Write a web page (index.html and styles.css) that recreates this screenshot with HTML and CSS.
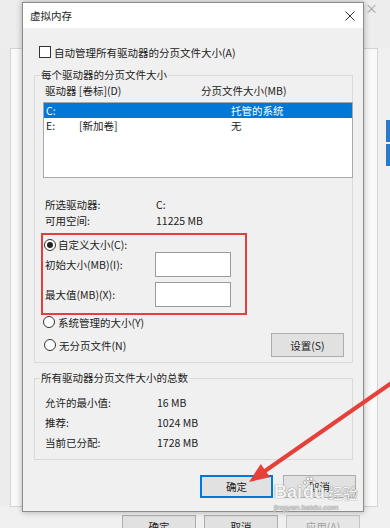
FILE: index.html
```html
<!DOCTYPE html>
<html>
<head>
  <link rel="stylesheet" href="styles.css">
</head>
<body>
  <!-- window behind the dialog -->
  <div class="host">
    <div class="host-top"><span class="host-close">×</span></div>
    <div class="host-mid">
      <div class="host-gutter"></div>
      <div class="host-panel"></div>
      <div class="host-side"><span></span><span></span></div>
    </div>
    <div class="host-buttons">
      <button class="win-button">确定</button>
      <button class="win-button">取消</button>
      <button class="win-button disabled">应用(A)</button>
    </div>
  </div>

  <div class="dialog">
    <div class="title-bar">
      <span class="title">虚拟内存</span>
      <svg class="close" viewBox="0 0 10 10" width="10" height="10">
        <path d="M0.5 0.5 L9.5 9.5 M9.5 0.5 L0.5 9.5" stroke="#333" stroke-width="1" fill="none"/>
      </svg>
    </div>

    <div class="dialog-body">
      <div class="check-row">
        <span class="checkbox"></span>
        <span>自动管理所有驱动器的分页文件大小(A)</span>
      </div>

      <fieldset class="group">
        <legend>每个驱动器的分页文件大小</legend>
        <div class="list-head">
          <span>驱动器 [卷标](D)</span>
          <span>分页文件大小(MB)</span>
        </div>
        <div class="drive-list">
          <div class="drive-row selected"><span>C:</span><span></span><span>托管的系统</span></div>
          <div class="drive-row"><span>E:</span><span>[新加卷]</span><span>无</span></div>
        </div>

        <div class="info">
          <span>所选驱动器:</span><span>C:</span>
          <span>可用空间:</span><span>11225 MB</span>
        </div>

        <div class="custom-box">
          <div class="radio-row tight">
            <span class="radio checked"></span>
            <span>自定义大小(C):</span>
          </div>
          <div class="size-rows">
            <span>初始大小(MB)(I):</span><input class="field" type="text">
            <span>最大值(MB)(X):</span><input class="field" type="text">
          </div>
        </div>

        <div class="radio-row sys">
          <span class="radio"></span>
          <span>系统管理的大小(Y)</span>
        </div>
        <div class="last-row">
          <div class="radio-row">
            <span class="radio"></span>
            <span>无分页文件(N)</span>
          </div>
          <button class="win-button set">设置(S)</button>
        </div>
      </fieldset>

      <fieldset class="group totals">
        <legend>所有驱动器分页文件大小的总数</legend>
        <div class="total-rows">
          <span>允许的最小值:</span><span>16 MB</span>
          <span>推荐:</span><span>1024 MB</span>
          <span>当前已分配:</span><span>1728 MB</span>
        </div>
      </fieldset>

      <div class="dialog-buttons">
        <button class="win-button default">确定</button>
        <button class="win-button">取消</button>
      </div>
    </div>
  </div>

  <!-- annotation -->
  <svg class="arrow" viewBox="0 0 390 528" width="390" height="528">
    <path d="M400 377 L265 471" stroke="#e5403a" stroke-width="4" fill="none"/>
    <polygon points="249,482 260.8,464 270,477.2" fill="#e5403a"/>
  </svg>

  <div class="watermark">
    <span class="wm-latin">Bai</span>
    <svg class="paw" viewBox="0 0 16 16" width="15" height="15">
      <g fill="#fff" stroke="#9a9a9a" stroke-width="0.8">
        <circle cx="3" cy="7" r="1.8"/>
        <circle cx="6.3" cy="3" r="1.9"/>
        <circle cx="10" cy="3" r="1.9"/>
        <circle cx="13.2" cy="7" r="1.8"/>
        <path d="M4.5 13 Q8 5.5 11.5 13 Q8 15 4.5 13 Z"/>
      </g>
    </svg>
    <span class="wm-latin">du</span>
    <span class="wm-cjk">经验</span>
    <div class="wm-url">jingyan.baidu.com</div>
  </div>
</body>
</html>
```

FILE: styles.css
```css
* {
  box-sizing: border-box;
}

body {
  margin: 0;
  width: 390px;
  height: 528px;
  overflow: hidden;
  position: relative;
  background: #f0f0f0;
  font-family: "Noto Sans CJK SC", "Liberation Sans", sans-serif;
  font-size: 10.5px;
  color: #222;
}

/* host window */
.host {
  height: 528px;
  display: flex;
  flex-direction: column;
}

.host-top {
  height: 48px;
  flex: none;
  display: flex;
  justify-content: flex-end;
  padding: 0 12px 0 0;
  background: #ededed;
}

.host-close {
  font-size: 13px;
  line-height: 16px;
  color: #a0a0a0;
}

.host-mid {
  height: 459px;
  flex: none;
  display: flex;
}

.host-gutter {
  width: 10px;
  background: #ececec;
}

.host-panel {
  flex: 1;
  background: #f9f9f9;
  border: 1px solid #d4d4d4;
}

.host-side {
  width: 12px;
  padding-top: 72px;
  display: flex;
  flex-direction: column;
  align-items: flex-end;
  gap: 2px;
}

.host-side span {
  width: 4px;
  height: 22px;
  background: #2b79c9;
}

.host-buttons {
  margin-top: 8px;
  display: flex;
  justify-content: flex-end;
  gap: 8px;
  padding-right: 30px;
}

.host-buttons .win-button {
  width: 74px;
}

.win-button {
  height: 23px;
  width: 73px;
  padding: 0;
  background: #e1e1e1;
  border: 1px solid #adadad;
  font-family: inherit;
  font-size: 10.5px;
  color: #222;
}

.win-button.disabled {
  color: #a0a0a0;
  background: #e6e6e6;
  border-color: #c4c4c4;
}

/* dialog */
.dialog {
  position: absolute;
  left: 22px;
  top: 2px;
  width: 342px;
  height: 510px;
  background: #f0f0f0;
  border: 1px solid #8c8c8c;
  box-shadow: 0 0 6px rgba(0, 0, 0, 0.3);
  display: flex;
  flex-direction: column;
}

.title-bar {
  height: 25px;
  flex: none;
  background: #fff;
  display: flex;
  align-items: center;
  justify-content: space-between;
  padding: 0 8px 0 7px;
}

.dialog-body {
  padding: 16px 10px 0 11px;
}

.check-row {
  height: 16px;
  display: flex;
  align-items: center;
  gap: 3px;
  padding-left: 5px;
}

.checkbox {
  width: 12px;
  height: 12px;
  background: #fff;
  border: 1px solid #333;
}

.group {
  margin: 8px 0 0;
  padding: 0 0 5px;
  min-width: 0;
  border: 1px solid #dadada;
}

.group legend {
  margin-left: 5px;
  padding: 0 1px;
  line-height: 14px;
}

.list-head {
  margin-top: 2px;
  line-height: 14px;
  padding-left: 10px;
  display: grid;
  grid-template-columns: 156px 1fr;
}

.drive-list {
  margin: 4px -1px 0 8px;
  height: 76px;
  background: #fff;
  border: 1px solid #a9a9a9;
}

.drive-row {
  height: 15px;
  line-height: 15px;
  padding-left: 2px;
  display: grid;
  grid-template-columns: 33px 152px 1fr;
}

.drive-row.selected {
  background: #0078d7;
  color: #fff;
}

.info {
  margin-top: 19px;
  padding-left: 10px;
  display: grid;
  grid-template-columns: 111px 1fr;
  line-height: 16px;
}

.custom-box {
  margin: 4px 0 0 6px;
  width: 206px;
  border: 2px solid #e2413b;
  padding: 2px 0 6px 1px;
}

.radio-row {
  height: 14px;
  display: flex;
  align-items: center;
  gap: 3px;
}

.radio-row.tight {
  height: 15px;
  gap: 2px;
}

.radio {
  width: 12px;
  height: 12px;
  border-radius: 50%;
  background: #fff;
  border: 1px solid #333;
  display: flex;
  align-items: center;
  justify-content: center;
}

.radio.checked::after {
  content: "";
  width: 6px;
  height: 6px;
  border-radius: 50%;
  background: #222;
}

.size-rows {
  padding-left: 1px;
  display: grid;
  grid-template-columns: 110px 76px;
  row-gap: 5px;
  align-items: center;
}

.field {
  width: 76px;
  height: 25px;
  margin: 0;
  background: #fff;
  border: 1px solid #9a9a9a;
}

.radio-row.sys {
  padding-left: 8px;
}

.last-row {
  margin-top: 4px;
  padding: 0 8px;
  display: flex;
  align-items: center;
  justify-content: space-between;
}

.last-row .radio-row {
  padding-left: 1px;
}

.win-button.set {
  height: 24px;
}

.totals {
  padding-bottom: 6px;
}

.total-rows {
  margin-top: 8px;
  padding-left: 10px;
  display: grid;
  grid-template-columns: 112px 1fr;
  line-height: 20px;
}

.dialog-buttons {
  margin: 15px -3px 0 0;
  display: flex;
  justify-content: flex-end;
  gap: 10px;
}

.win-button.default {
  border: 2px solid #0078d7;
}

/* annotation + watermark */
.arrow {
  position: absolute;
  left: 0;
  top: 0;
  pointer-events: none;
}

.watermark {
  position: absolute;
  left: 274px;
  top: 476px;
  width: 100px;
  display: flex;
  flex-wrap: wrap;
  align-items: flex-end;
  color: rgba(255, 255, 255, 0.92);
  text-shadow: 0 0 1px #888, 0 0 1px #888;
}

.wm-latin {
  font-family: "Liberation Sans", sans-serif;
  font-weight: bold;
  font-size: 18px;
  line-height: 22px;
}

.paw {
  margin: 0 -14px 12px 0;
}

.wm-cjk {
  margin-left: 3px;
  font-size: 15px;
  line-height: 21px;
}

.wm-url {
  width: 100%;
  font-family: "Liberation Sans", sans-serif;
  font-size: 8px;
  line-height: 10px;
  color: rgba(255, 255, 255, 0.6);
}
```
